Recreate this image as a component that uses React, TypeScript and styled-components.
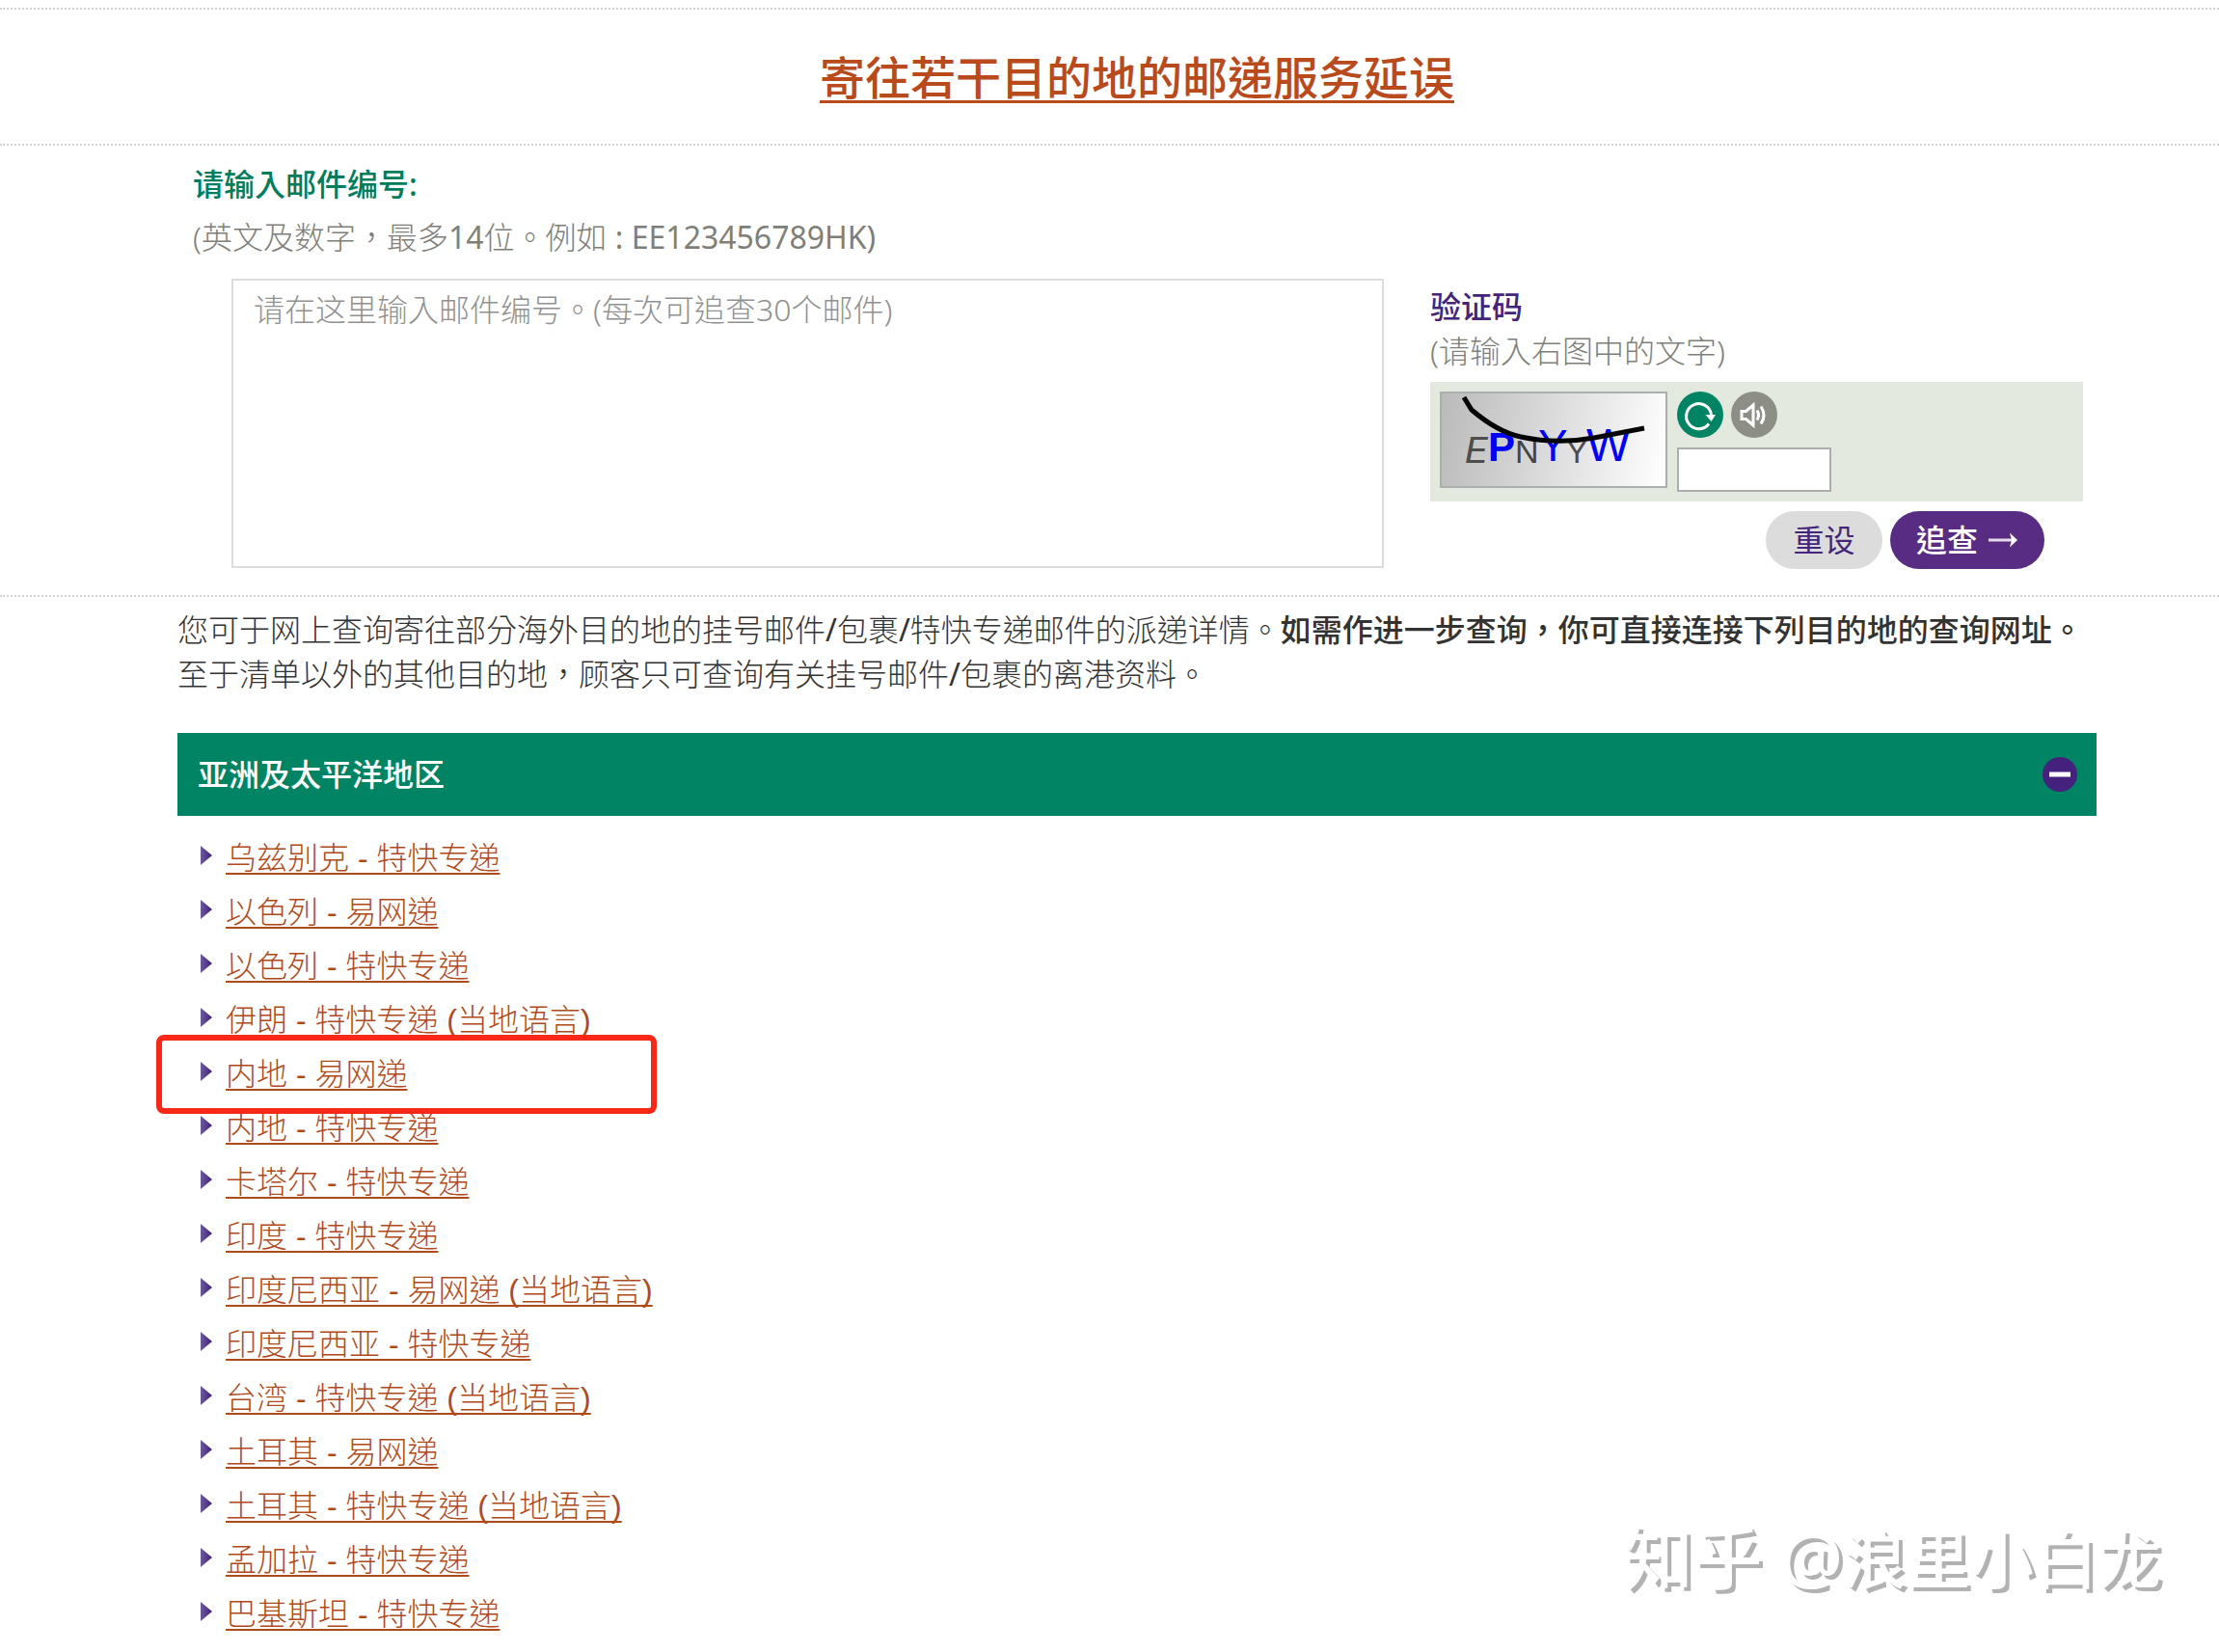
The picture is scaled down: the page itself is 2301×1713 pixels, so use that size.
import React from "react";
import styled, { createGlobalStyle } from "styled-components";

const GlobalStyle = createGlobalStyle`
  *, *::before, *::after { box-sizing: border-box; }
  body {
    margin: 0;
    background: #fff;
    color: #333;
    font-family: "Noto Sans", "Noto Sans CJK TC", sans-serif;
    font-size: 32px;
    font-weight: 300;
    line-height: 46px;
  }
  button, input, textarea { font: inherit; }
`;

const dotted = "2px dotted #d3d3d3";

const Page = styled.div`
  position: relative;
  min-height: 100vh;
  padding-top: 8px;
  overflow: hidden;
`;

const Notice = styled.header`
  border-top: ${dotted};
  border-bottom: ${dotted};
  padding: 40px 127px 39px 184px;
  text-align: center;
`;

const NoticeTitle = styled.h1`
  margin: 0;
  font-size: 47px;
  font-weight: 500;
  line-height: 60px;
`;

const NoticeLink = styled.a`
  color: #b84a1c;
  text-decoration: underline;
  text-decoration-thickness: 3px;
  text-decoration-skip-ink: none;
  text-underline-offset: 6px;
`;

const SearchForm = styled.form`
  display: grid;
  grid-template-columns: minmax(0, 1235fr) minmax(0, 677fr);
  column-gap: 48px;
  padding: 17px 141px 27px 200px;
  border-bottom: ${dotted};
`;

const FormHead = styled.div`
  grid-column: 1 / -1;
  display: flex;
  flex-direction: column;
  gap: 9px;
  padding-bottom: 20px;
`;

const FieldLabel = styled.label<{ $color: string }>`
  color: ${(p) => p.$color};
  font-weight: 500;
`;

const Hint = styled.span`
  color: #7f7f79;
`;

const Latin = styled.span`
  font-weight: 400;
`;

const NumbersBox = styled.textarea`
  display: block;
  margin-left: 40px;
  height: 300px;
  padding: 7px 21px;
  border: 2px solid #dcdcdc;
  background: #fff;
  color: #333;
  resize: none;
  &::placeholder { color: #919191; opacity: 1; }
`;

const CaptchaColumn = styled.div`
  display: flex;
  flex-direction: column;
  padding-top: 6px;
`;

const CaptchaPanel = styled.div`
  display: flex;
  gap: 10px;
  margin-top: 9px;
  padding: 10px;
  background: #e3e9de;
`;

const CaptchaImage = styled.svg`
  width: 236px;
  height: 100px;
  border: 2px solid #abaeab;
  background: linear-gradient(100deg, #bababa, #ffffff);
`;

const CaptchaControls = styled.div`
  display: flex;
  flex-direction: column;
  gap: 10px;
`;

const IconRow = styled.div`
  display: flex;
  gap: 8px;
`;

const RoundButton = styled.button<{ $color: string }>`
  width: 48px;
  height: 48px;
  padding: 0;
  border: 0;
  border-radius: 50%;
  background: ${(p) => p.$color};
  svg { display: block; }
`;

const CaptchaInput = styled.input`
  width: 160px;
  height: 46px;
  padding: 0 8px;
  border: 2px solid #abaeab;
  background: #fff;
`;

const Actions = styled.div`
  display: flex;
  justify-content: flex-end;
  gap: 8px;
  margin-top: 10px;
  padding-right: 40px;
`;

const PillButton = styled.button<{ $primary?: boolean }>`
  display: flex;
  align-items: center;
  justify-content: center;
  gap: 10px;
  width: ${(p) => (p.$primary ? 160 : 121)}px;
  height: 60px;
  padding: 0;
  border: 0;
  border-radius: 30px;
  background: ${(p) => (p.$primary ? "#582c83" : "#dcdcdc")};
  color: ${(p) => (p.$primary ? "#fff" : "#43257a")};
  font-weight: ${(p) => (p.$primary ? 500 : 400)};
`;

const Content = styled.main`
  padding: 11px 127px 0 184px;
`;

const Intro = styled.p`
  margin: 0 0 38px;
  strong { font-weight: 500; }
`;

const RegionHeading = styled.h2`
  margin: 0;
  font: inherit;
`;

const RegionButton = styled.button`
  display: flex;
  align-items: center;
  justify-content: space-between;
  width: 100%;
  height: 86px;
  padding: 0 20px 0 21px;
  border: 0;
  background: #008463;
  color: #fff;
  font-weight: 500;
`;

const LinkList = styled.ul`
  margin: 0;
  padding: 16px 0 0 24px;
  list-style: none;
  font-family: "Liberation Sans", "Noto Sans CJK TC", sans-serif;
`;

const LinkRow = styled.li`
  position: relative;
  display: flex;
  align-items: center;
  gap: 14px;
  height: 56px;
`;

const Arrow = styled.span`
  width: 12px;
  height: 20px;
  margin-bottom: 6px;
  background: linear-gradient(90deg, #6a5a9c, #43217c);
  clip-path: polygon(0 0, 100% 50%, 0 100%);
`;

const DestinationLink = styled.a`
  color: #b04a1a;
  text-decoration: underline;
  text-decoration-thickness: 2px;
  text-decoration-skip-ink: none;
  text-underline-offset: 4px;
`;

const Highlight = styled.span`
  position: absolute;
  left: -46px;
  top: -13px;
  width: 519px;
  height: 82px;
  border: 6px solid #f82818;
  border-radius: 8px;
  z-index: 1;
  pointer-events: none;
`;

const Watermark = styled.div`
  position: absolute;
  right: 60px;
  bottom: 52px;
  color: #fff;
  font-size: 66px;
  font-weight: 500;
  line-height: 90px;
  text-shadow: 4px 4px 0 #b2b2b2;
`;

const WatermarkSite = styled.span`
  font-size: 72px;
`;

const regionLinks = [
  "乌兹别克 - 特快专递",
  "以色列 - 易网递",
  "以色列 - 特快专递",
  "伊朗 - 特快专递 (当地语言)",
  "内地 - 易网递",
  "内地 - 特快专递",
  "卡塔尔 - 特快专递",
  "印度 - 特快专递",
  "印度尼西亚 - 易网递 (当地语言)",
  "印度尼西亚 - 特快专递",
  "台湾 - 特快专递 (当地语言)",
  "土耳其 - 易网递",
  "土耳其 - 特快专递 (当地语言)",
  "孟加拉 - 特快专递",
  "巴基斯坦 - 特快专递",
];
const highlighted = "内地 - 易网递";

function Captcha() {
  return (
    <CaptchaImage viewBox="2 2 232 96" role="img">
      <g fontFamily="'Liberation Sans', sans-serif">
        <text x="26" y="74" fontFamily="'Liberation Mono', monospace" fontStyle="italic" fontSize="40" fill="#4d4d4d">E</text>
        <text x="50" y="72" fontSize="42" fontWeight="700" fill="#0000f5">P</text>
        <text x="78" y="74" fontSize="34" fill="#444">N</text>
        <text x="102" y="72" fontSize="46" fill="#0000f5">Y</text>
        <text x="132" y="74" fontFamily="'Liberation Mono', monospace" fontSize="34" fill="#4d4d4d">Y</text>
        <text x="152" y="72" fontSize="48" fill="#0000f5">W</text>
      </g>
      <path d="M25 6 L33 19 Q60 42 84 47 Q122 55 160 48 L212 38" fill="none" stroke="#050505" strokeWidth="5" />
    </CaptchaImage>
  );
}

export default function App() {
  return (
    <>
      <GlobalStyle />
      <Page lang="zh-Hant">
        <Notice>
          <NoticeTitle>
            <NoticeLink href="#delay">寄往若干目的地的邮递服务延误</NoticeLink>
          </NoticeTitle>
        </Notice>

        <SearchForm onSubmit={(e) => e.preventDefault()}>
          <FormHead>
            <FieldLabel htmlFor="numbers" $color="#007d5d">请输入邮件编号:</FieldLabel>
            <Hint>
              (英文及数字，最多<Latin>14</Latin>位。例如<Latin> : EE123456789HK)</Latin>
            </Hint>
          </FormHead>
          <NumbersBox id="numbers" placeholder="请在这里输入邮件编号。(每次可追查30个邮件)" />
          <CaptchaColumn>
            <FieldLabel htmlFor="captcha" $color="#43257a">验证码</FieldLabel>
            <Hint>(请输入右图中的文字)</Hint>
            <CaptchaPanel>
              <Captcha />
              <CaptchaControls>
                <IconRow>
                  <RoundButton type="button" $color="#008463">
                    <svg width="48" height="48" viewBox="0 0 48 48">
                      <path d="M33 33.5 A13 13 0 1 1 35.5 24" fill="none" stroke="#fff" strokeWidth="3" />
                      <path d="M29.5 24 H40 L35.5 31 Z" fill="#fff" />
                    </svg>
                  </RoundButton>
                  <RoundButton type="button" $color="#8d8f86">
                    <svg width="48" height="48" viewBox="0 0 48 48" fill="none" stroke="#fff" strokeWidth="3">
                      <path d="M11 20.500 H15.500 L23 14 V35 L15.500 28.500 H11 Z" />
                      <path d="M27 19.500 Q30 24.500 27 29.500 M31 15.500 Q37 24.500 31 33.500" />
                    </svg>
                  </RoundButton>
                </IconRow>
                <CaptchaInput id="captcha" type="text" />
              </CaptchaControls>
            </CaptchaPanel>
            <Actions>
              <PillButton type="reset">重设</PillButton>
              <PillButton type="submit" $primary>
                追查
                <svg width="32" height="20" viewBox="0 0 32 20">
                  <path d="M1 10 H25" stroke="#e4dcec" strokeWidth="3" />
                  <path d="M23 2.500 L31 10 L23 17.500 L25 10 Z" fill="#fff" />
                </svg>
              </PillButton>
            </Actions>
          </CaptchaColumn>
        </SearchForm>

        <Content>
          <Intro>
            您可于网上查询寄往部分海外目的地的挂号邮件<Latin>/</Latin>包裹<Latin>/</Latin>特快专递邮件的派递详情。
            <strong>如需作进一步查询，你可直接连接下列目的地的查询网址。</strong>
            <br />
            至于清单以外的其他目的地，顾客只可查询有关挂号邮件<Latin>/</Latin>包裹的离港资料。
          </Intro>
          <RegionHeading>
            <RegionButton type="button" aria-expanded="true">
              亚洲及太平洋地区
              <svg width="36" height="36" viewBox="0 0 36 36">
                <circle cx="18" cy="18" r="18" fill="#43217c" />
                <rect x="7" y="15.500" width="22" height="5" fill="#fff" />
              </svg>
            </RegionButton>
          </RegionHeading>
          <LinkList>
            {regionLinks.map((name) => (
              <LinkRow key={name}>
                <Arrow />
                <DestinationLink href="#destination">{name}</DestinationLink>
                {name === highlighted && <Highlight />}
              </LinkRow>
            ))}
          </LinkList>
        </Content>

        <Watermark>
          <WatermarkSite>知乎 @</WatermarkSite>浪里小白龙
        </Watermark>
      </Page>
    </>
  );
}
